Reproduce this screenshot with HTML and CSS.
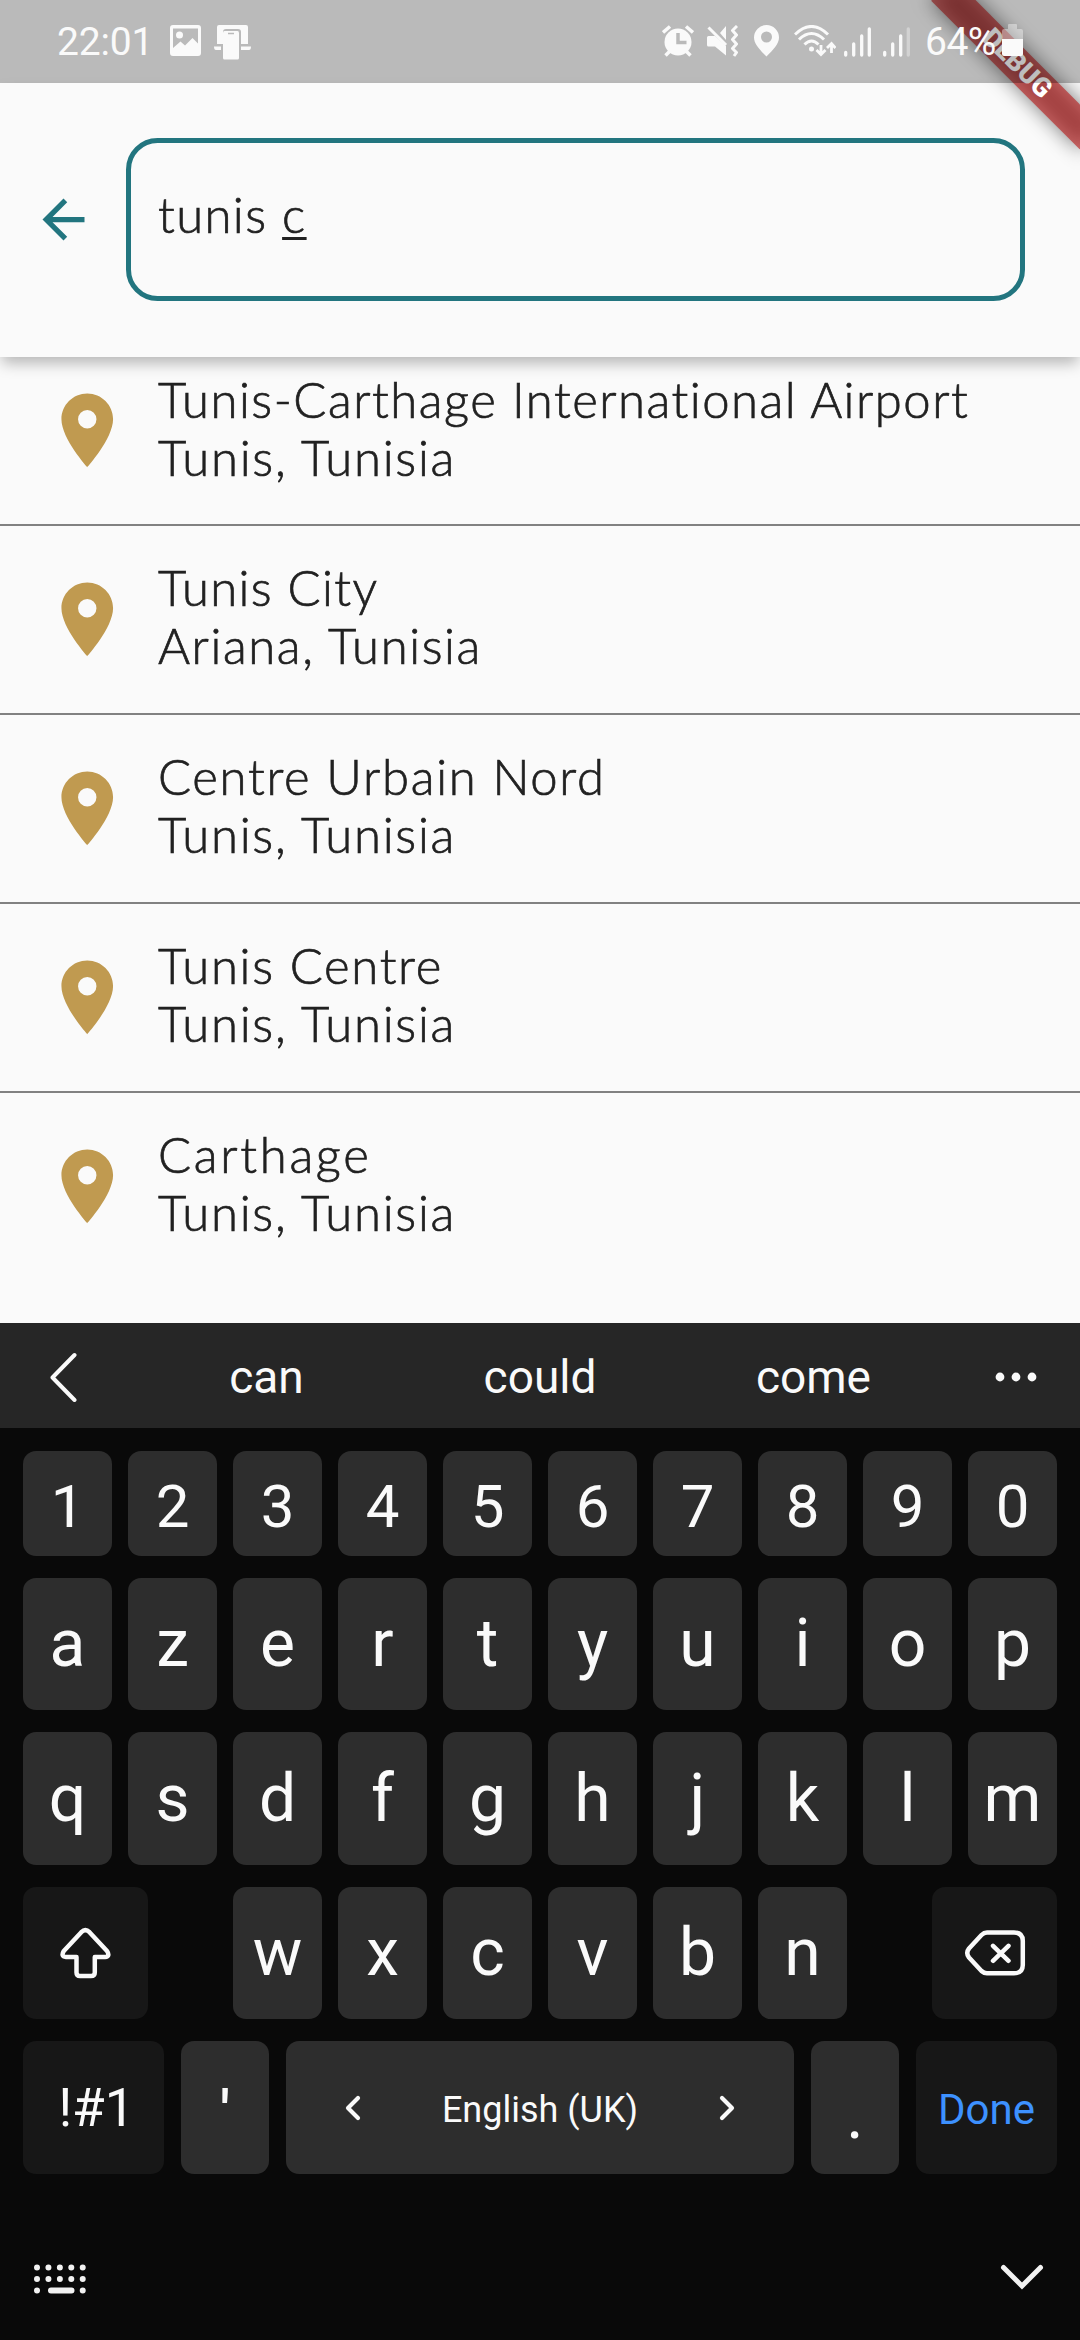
FILE: index.html
```html
<!DOCTYPE html>
<html lang="en">
<head>
<meta charset="utf-8">
<title>Place search</title>
<link rel="stylesheet" href="styles.css">
</head>
<body>
<div class="screen">
  <div class="ribbon"><span class="ribbon-shadow"></span><span class="ribbon-band">DEBUG</span></div>

  <header class="status">
    <div class="status-left">
      <span class="clock">22:01</span>
      <svg class="s-image" width="31" height="31" viewBox="0 0 31 31"><path fill="#fafafa" fill-rule="evenodd" d="M3 0H28Q31 0 31 3V28Q31 31 28 31H3Q0 31 0 28V3Q0 0 3 0ZM3 3.500V23L10.500 16.500L15 20.500L22.500 13L28 18.500V3.500Z"/><circle cx="9.500" cy="10" r="3.500" fill="#fafafa"/></svg>
      <svg width="37" height="35" viewBox="0 0 37 35"><path fill="#fafafa" d="M5 0H32Q34 0 34 2V19H27V7Q27 4 24 4H12Q9 4 9 7V19H3V2Q3 0 5 0ZM0 21.500H7V25H2Q0 25 0 21.500ZM27 21.500H37Q37 25 35 25H27ZM10.500 6H23.500Q25 6 25 8V33Q25 34.500 23.500 34.500H10.500Q9 34.500 9 33V8Q9 6 10.500 6Z"/><path stroke="#bababa" stroke-width="1.500" d="M14 8.500H20"/></svg>
    </div>
    <div class="status-right">
      <svg width="32" height="32" viewBox="0 0 32 32"><circle cx="16" cy="17" r="13.500" fill="#fafafa"/><path stroke="#fafafa" stroke-width="3.500" fill="none" d="M1 7.500L8 1.500M24 1.500L31 7.500M8 26L3.500 30.500M24 26L28.500 30.500"/><path stroke="#bababa" stroke-width="3.500" fill="none" d="M16 8V17.500H24.500"/></svg>
      <svg class="s-mute" width="31" height="32" viewBox="0 0 31 32"><path fill="#fafafa" d="M1.500 11H8L19 21V30.500L8 21.500H1.500Q0 21.500 0 20V12.500Q0 11 1.500 11ZM13 8L19 1V15Z"/><path stroke="#fafafa" stroke-width="3" fill="none" d="M1.500 2.500L19 20"/><path stroke="#fafafa" stroke-width="3" fill="none" stroke-linejoin="round" d="M30 1L25.500 5.500L29.500 10L25.500 14.500L29.500 19L25.500 23.500L29.500 27.500L27 31"/></svg>
      <svg class="s-pin" width="25" height="32" viewBox="0 0 25 32"><path fill="#fafafa" fill-rule="evenodd" d="M12.500 0A12.500 12.500 0 0 0 0 12.500C0 19 6 25 12.500 31.500C19 25 25 19 25 12.500A12.500 12.500 0 0 0 12.500 0ZM12.500 6.500A5.500 5.500 0 1 1 12.500 17.500A5.500 5.500 0 1 1 12.500 6.500Z"/></svg>
      <svg class="s-wifi" width="42" height="32" viewBox="0 0 42 32"><g stroke="#fafafa" fill="none" stroke-width="3"><path d="M1 9.500Q17.500-6.500 34 9.500M5 14.500Q17.500 2.500 30 14.500M10.500 19.500Q17.500 12.500 24.500 19.500"/><path stroke-width="2.800" d="M27 20V29M22.500 25L27 29.500L31.500 25M37.500 28V19.500M33 23L37.500 18.500L41.500 23"/></g><circle cx="17.500" cy="24" r="2.500" fill="#fafafa"/></svg>
      <svg class="s-signal" width="27" height="30" viewBox="0 0 27 30"><path stroke="#fafafa" stroke-width="3.300" stroke-linecap="round" d="M1.700 25.500V28M9.700 17V28M17.700 9V28M25.300 2V28"/></svg>
      <svg class="s-signal two" width="27" height="30" viewBox="0 0 27 30"><path stroke="#fafafa" stroke-width="3.300" stroke-linecap="round" d="M1.700 25.500V28M9.700 17V28M17.700 9V28"/><path stroke="#d2d2d2" stroke-width="3.300" stroke-linecap="round" d="M25.300 2V28"/></svg>
      <span class="percent">64%</span>
      <svg class="s-battery" width="21" height="32" viewBox="0 0 21 32"><path fill="#fff" fill-opacity=".4" d="M6 1Q6 0 7 0H14Q15 0 15 1V5H19Q21 5 21 7V15H0V7Q0 5 2 5H6Z"/><path fill="#fafafa" d="M0 15H21V30Q21 32 19 32H2Q0 32 0 30Z"/></svg>
    </div>
  </header>

  <section class="appbar">
    <svg class="back" width="63" height="63" viewBox="0 0 24 24"><path fill="#22757f" d="M20 11H7.830l5.590-5.590L12 4l-8 8 8 8 1.410-1.410L7.830 13H20v-2z"/></svg>
    <div class="field"><span>tunis <span class="composing">c</span></span></div>
  </section>

  <main class="results">
    <article class="place"><svg class="pin" viewBox="0 0 24 24"><path d="M12 2C8.130 2 5 5.130 5 9c0 5.250 7 13 7 13s7-7.750 7-13c0-3.870-3.130-7-7-7zm0 9.500a2.500 2.500 0 0 1 0-5 2.500 2.500 0 0 1 0 5z"/></svg><div class="lines"><p class="l-airport">Tunis-Carthage International Airport</p><p class="l-tunis">Tunis, Tunisia</p></div></article>
    <article class="place"><svg class="pin" viewBox="0 0 24 24"><path d="M12 2C8.130 2 5 5.130 5 9c0 5.250 7 13 7 13s7-7.750 7-13c0-3.870-3.130-7-7-7zm0 9.500a2.500 2.500 0 0 1 0-5 2.500 2.500 0 0 1 0 5z"/></svg><div class="lines"><p class="l-city">Tunis City</p><p class="l-ariana">Ariana, Tunisia</p></div></article>
    <article class="place"><svg class="pin" viewBox="0 0 24 24"><path d="M12 2C8.130 2 5 5.130 5 9c0 5.250 7 13 7 13s7-7.750 7-13c0-3.870-3.130-7-7-7zm0 9.500a2.500 2.500 0 0 1 0-5 2.500 2.500 0 0 1 0 5z"/></svg><div class="lines"><p class="l-nord">Centre Urbain Nord</p><p class="l-tunis">Tunis, Tunisia</p></div></article>
    <article class="place"><svg class="pin" viewBox="0 0 24 24"><path d="M12 2C8.130 2 5 5.130 5 9c0 5.250 7 13 7 13s7-7.750 7-13c0-3.870-3.130-7-7-7zm0 9.500a2.500 2.500 0 0 1 0-5 2.500 2.500 0 0 1 0 5z"/></svg><div class="lines"><p class="l-centre">Tunis Centre</p><p class="l-tunis">Tunis, Tunisia</p></div></article>
    <article class="place"><svg class="pin" viewBox="0 0 24 24"><path d="M12 2C8.130 2 5 5.130 5 9c0 5.250 7 13 7 13s7-7.750 7-13c0-3.870-3.130-7-7-7zm0 9.500a2.500 2.500 0 0 1 0-5 2.500 2.500 0 0 1 0 5z"/></svg><div class="lines"><p class="l-carthage">Carthage</p><p class="l-tunis">Tunis, Tunisia</p></div></article>
  </main>

  <section class="keyboard">
    <div class="suggest">
      <svg width="28" height="50" viewBox="0 0 28 50"><path fill="none" stroke="#fafafa" stroke-width="4" stroke-linecap="round" stroke-linejoin="round" d="M25.500 3L3.500 25.500L25.500 48"/></svg>
      <div class="words"><span>can</span><span>could</span><span>come</span></div>
      <svg width="42" height="10" viewBox="0 0 42 10"><g fill="#fafafa"><circle cx="5" cy="5" r="4.400"/><circle cx="21" cy="5" r="4.400"/><circle cx="37" cy="5" r="4.400"/></g></svg>
    </div>
    <div class="keys">
      <div class="row digits"><b>1</b><b>2</b><b>3</b><b>4</b><b>5</b><b>6</b><b>7</b><b>8</b><b>9</b><b>0</b></div>
      <div class="row"><b>a</b><b>z</b><b>e</b><b>r</b><b>t</b><b>y</b><b>u</b><b>i</b><b>o</b><b>p</b></div>
      <div class="row"><b>q</b><b>s</b><b>d</b><b>f</b><b>g</b><b>h</b><b>j</b><b>k</b><b>l</b><b>m</b></div>
      <div class="row split">
        <b class="fn"><svg width="51" height="53" viewBox="0 0 51 53"><path fill="none" stroke="#fafafa" stroke-width="4.500" stroke-linejoin="round" d="M21.300 5.200Q25.400 1.200 29.500 5.200L47 24Q50.500 29.500 45 30H34.800V45.500Q34.800 49 31 49H20Q16.500 49 16.500 45.500V30H6Q.5 29.500 3.800 24Z"/></svg></b>
        <div class="letters"><b>w</b><b>x</b><b>c</b><b>v</b><b>b</b><b>n</b></div>
        <b class="fn"><svg width="64" height="50" viewBox="0 0 64 50"><path fill="none" stroke="#fafafa" stroke-width="4.500" stroke-linecap="round" stroke-linejoin="round" d="M24 4.500H51Q59.800 4.500 59.800 13V37Q59.800 45.300 51 45.300H24Q21 45.300 18.500 43L6 29.500Q2.500 25 6 20.500L18.500 7Q21 4.500 24 4.500ZM30 17.800L45.500 32.800M45.500 17.800L30 32.800"/></svg></b>
      </div>
      <div class="row bottom">
        <b class="fn sym">!#1</b>
        <b class="quote">'</b>
        <b class="space"><svg width="16" height="26" viewBox="0 0 16 26"><path fill="none" stroke="#fafafa" stroke-width="4.200" stroke-linecap="round" stroke-linejoin="round" d="M13 3L3 13L13 23"/></svg><span>English (UK)</span><svg width="16" height="26" viewBox="0 0 16 26"><path fill="none" stroke="#fafafa" stroke-width="4.200" stroke-linecap="round" stroke-linejoin="round" d="M3 3L13 13L3 23"/></svg></b>
        <b class="dot">.</b>
        <b class="fn done">Done</b>
      </div>
    </div>
    <footer class="nav">
      <svg width="52" height="30" viewBox="0 0 52 30"><g fill="none" stroke="#f2f2f2" stroke-width="6" stroke-linecap="round"><path stroke-dasharray="0 11.430" d="M3 3.500H49M3 15H49"/><path d="M3 26.500H3.010M17 26.500H37.500M48.720 26.500H48.730"/></g></svg>
      <svg width="44" height="28" viewBox="0 0 44 28"><path fill="none" stroke="#f2f2f2" stroke-width="5" stroke-linecap="round" d="M3.500 3.500L22 22L40.500 3.500"/></svg>
    </footer>
  </section>
</div>
</body>
</html>
```
FILE: styles.css
```css
* { box-sizing: border-box; }
body { margin: 0; background: #fafafa; }
svg { display: block; flex: none; }
p { margin: 0; }
.screen {
  position: relative;
  display: flex;
  flex-direction: column;
  width: 1080px;
  height: 2340px;
  overflow: hidden;
  background: #fafafa;
  font-family: Roboto, sans-serif;
}

/* corner ribbon lies over the app bar and beneath the status bar */
.ribbon {
  position: absolute;
  z-index: 3;
  left: 975px;
  top: 73.5px;
  width: 210px;
  height: 31.5px;
  transform-origin: 105px -73.5px;
  transform: rotate(45deg);
}
.ribbon-shadow {
  position: absolute;
  inset: 0;
  background: rgba(0, 0, 0, .5);
  filter: blur(10px);
}
.ribbon-band {
  position: absolute;
  inset: 0;
  background: rgba(183, 28, 28, .63);
  color: #fff;
  font-size: 26.8px;
  font-weight: 900;
  line-height: 31.5px;
  text-align: center;
}

.status {
  position: relative;
  z-index: 4;
  display: flex;
  justify-content: space-between;
  height: 83px;
  padding: 0 57px;
  background: rgba(0, 0, 0, .256);
  color: #fafafa;
  font-size: 39px;
  line-height: 85px;
}
.status-left, .status-right { display: flex; align-items: flex-start; }
.status-left svg, .status-right svg { margin-top: 25px; }
.clock { width: 113px; letter-spacing: -.2px; }
.status-left .s-image { margin-right: 13px; }
.s-mute { margin-left: 13px; }
.s-pin { margin-left: 16px; }
.s-wifi { margin-left: 15px; }
.status-right .s-signal { margin: 27px 0 0 8px; }
.status-right .two { margin-left: 12px; }
.percent { width: 77px; margin-left: 15px; letter-spacing: -.5px; white-space: nowrap; }
.status-right .s-battery { margin-top: 24px; }

.appbar {
  position: relative;
  z-index: 2;
  display: flex;
  align-items: center;
  gap: 31px;
  height: 273.5px;
  padding: 0 55.5px 0 32px;
  background: #fafafa;
  box-shadow: 0 8px 14px -2px rgba(0, 0, 0, .28);
}
.field, .lines {
  color: #212121;
  font: 300 49px/58px Lato, sans-serif;
  -webkit-text-stroke: .7px #212121;
}
.field {
  flex: 1;
  height: 163px;
  padding: 41.5px 27px 0;
  border: 5.25px solid #22757f;
  border-radius: 31.5px;
  letter-spacing: 1.4px;
}
.composing {
  text-decoration: underline;
  text-decoration-thickness: 3px;
  text-underline-offset: 4px;
}

.results { height: 966.5px; }
.place {
  display: flex;
  align-items: flex-start;
  height: 189px;
  padding: 48.500px 0 0 43px;
  border-bottom: 2px solid #818181;
}
.place:first-child { height: 169.500px; padding-top: 29.500px; }
.place:last-child { border-bottom: 0; }
.pin { width: 88.500px; height: 88.500px; fill: #c09a50; }
.lines {
  margin: -16.5px 0 0 26.500px;
  white-space: nowrap;
}
.l-airport { letter-spacing: 1.5px; }
.l-tunis { letter-spacing: 1.75px; }
.l-city { letter-spacing: 1.35px; }
.l-ariana { letter-spacing: 1.6px; }
.l-nord, .l-centre { letter-spacing: 1.7px; }
.l-carthage { letter-spacing: 2.7px; }

.keyboard {
  display: flex;
  flex-direction: column;
  flex: 1;
  background: #090909;
  color: #fafafa;
}
.suggest {
  display: flex;
  align-items: center;
  justify-content: space-between;
  height: 105px;
  padding: 2px 43px 0 49px;
  background: #262626;
}
.words {
  display: grid;
  grid-template-columns: repeat(3, 273.5px);
  margin-left: 8px;
  text-align: center;
  font-size: 46px;
  line-height: 54px;
}
.keys {
  display: grid;
  grid-template-rows: 105px 132px 133px 132px 133px;
  row-gap: 22px;
  padding: 23px 23px 0;
}
.row { display: grid; grid-template-columns: repeat(10, 89px); column-gap: 16px; }
.row b {
  display: flex;
  align-items: center;
  justify-content: center;
  border-radius: 13px;
  background: #2d2d2d;
  font-size: 66px;
  font-weight: 400;
  line-height: 1;
}
.digits b { padding-top: 6px; font-size: 60px; }
.row.split { display: flex; justify-content: space-between; }
.letters { display: grid; grid-template-columns: repeat(6, 89px); column-gap: 16px; }
.row .fn { background: #171717; }
.split .fn { width: 125px; }
.row.bottom { grid-template-columns: 141px 88px 508px 88px 141px; column-gap: 17px; }
.bottom .sym { padding: 2px 0 0 6px; font-size: 53px; }
.bottom .quote { padding-top: 10px; font-size: 60px; font-weight: 500; }
.bottom .space { justify-content: space-between; padding: 0 59px; font-size: 36px; }
.space span { padding-top: 4px; }
.bottom .dot { padding-top: 16px; }
.bottom .done { padding-top: 4px; color: #3d91ff; font-size: 42px; }
.nav {
  display: flex;
  justify-content: space-between;
  align-items: flex-start;
  padding: 90px 36px 0 33.500px;
}
```
